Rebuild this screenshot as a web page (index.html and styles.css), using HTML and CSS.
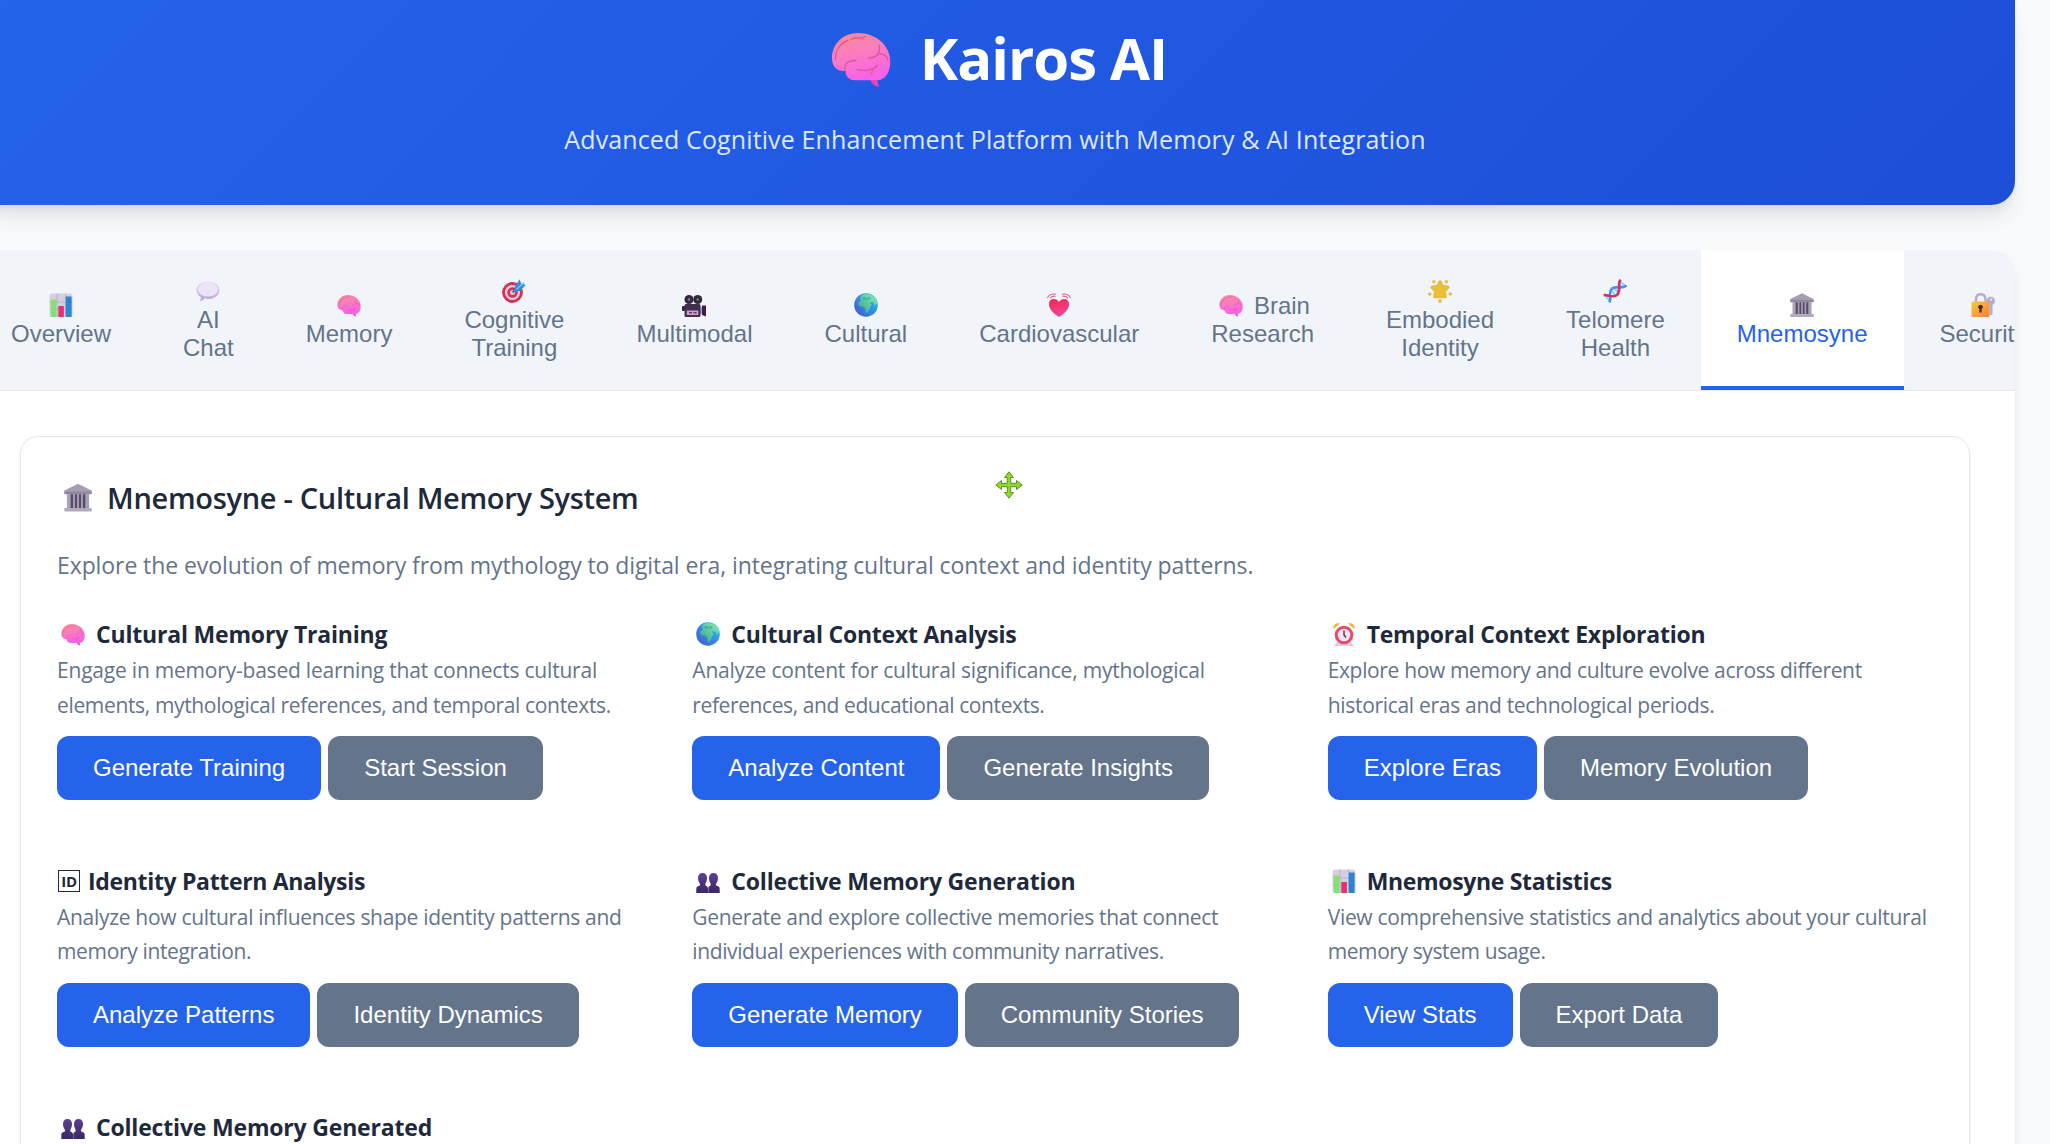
FILE: index.html
```html
<!DOCTYPE html>
<html lang="en">
<head>
<meta charset="utf-8">
<title>Kairos AI</title>
<link rel="stylesheet" href="styles.css">
</head>
<body>
<svg class="sprite" aria-hidden="true">
  <defs>
    <linearGradient id="pink" x1="0" y1="0" x2="0.3" y2="1"><stop offset="0" stop-color="#f98d90"/><stop offset="0.5" stop-color="#fb7cc0"/><stop offset="1" stop-color="#f763e6"/></linearGradient>
    <linearGradient id="sea" x1="1" y1="0" x2="0" y2="1"><stop offset="0" stop-color="#22c5f5"/><stop offset="0.5" stop-color="#2f8fe6"/><stop offset="1" stop-color="#4a4fc8"/></linearGradient>
    <linearGradient id="land" x1="1" y1="0" x2="0" y2="1"><stop offset="0" stop-color="#7ff5b0"/><stop offset="1" stop-color="#3f9f8c"/></linearGradient>
    <linearGradient id="heart" x1="0" y1="0" x2="0.3" y2="1"><stop offset="0" stop-color="#f4264e"/><stop offset="1" stop-color="#f0449c"/></linearGradient>
    <linearGradient id="bubble" x1="0" y1="0" x2="0" y2="1"><stop offset="0" stop-color="#e6dcf0"/><stop offset="1" stop-color="#b9a8d2"/></linearGradient>
    <linearGradient id="lock" x1="0" y1="0" x2="1" y2="1"><stop offset="0" stop-color="#fcc83c"/><stop offset="1" stop-color="#f3803a"/></linearGradient>
    <linearGradient id="purple" x1="0" y1="0" x2="0" y2="1"><stop offset="0" stop-color="#5b3f96"/><stop offset="1" stop-color="#3c2766"/></linearGradient>
    <linearGradient id="green" x1="0" y1="0" x2="0" y2="1"><stop offset="0" stop-color="#8edd6c"/><stop offset="1" stop-color="#74e878"/></linearGradient>
  </defs>
  <symbol id="brain" viewBox="0 0 24 24">
    <path d="M15.6 20.3l2.6-.4 1 3.6c-1.7 0-3-1.300-3.600-3.200z" fill="#e844b8"/>
    <path d="M.4 12C.4 6.600 4.600 2 10.800 2 18 2 23.700 7 23.700 13.500c0 4.200-1.900 7.400-5.400 7.400H9.500c-2.400 0-3.800-1.800-3.700-3.700C2.300 17.400.4 15.400.4 12z" fill="url(#pink)"/>
    <path d="M1.800 12.500c0-4 2.200-6.700 5-7.500M8 4.600c2.500-1.600 4.500.2 5.600-1.200M5.600 17c-.5-2.800 1.400-4.200 4.400-4M15 12c3.800 0 4.800-2.600 4.300-5M19.300 10.200c2 .2 3.200 1.200 3.500 2.600M10.500 16.600c3 .8 6.500.4 8-1.700M16.200 16.200c.6.600.4 1.600-.2 2.200" fill="none" stroke="#d95a98" stroke-width=".55" stroke-linecap="round"/>
  </symbol>
  <symbol id="chart" viewBox="0 0 24 24">
    <rect x=".5" y=".5" width="23" height="23.500" rx="2.500" fill="#d6cfe0"/>
    <path d="M.5 9h23M.5 16h23M8 .5v23M16.500.5v23" stroke="#b5abc4" stroke-width=".8"/>
    <rect x="1.800" y="6.500" width="5.600" height="17.500" fill="url(#green)"/>
    <rect x="9.300" y="13" width="5.600" height="11" fill="#e5336f"/>
    <rect x="16.800" y="3.500" width="5.800" height="20.500" fill="#2d83d4"/>
  </symbol>
  <symbol id="speech" viewBox="0 0 24 24">
    <path d="M12 2.500c6.400 0 11.500 3.700 11.500 8.700s-5 8.800-11.500 8.800c-1.200 0-2.300-.1-3.400-.4-1.200 1.700-3 2.700-4.600 2.500.7-1.200 1-2.500.7-4.200C2.200 16.400.5 14 .5 11.200.5 6.200 5.600 2.500 12 2.500z" fill="url(#bubble)"/>
    <ellipse cx="12" cy="10.500" rx="10" ry="7" fill="#f1eaf8" opacity=".85"/>
  </symbol>
  <symbol id="target" viewBox="0 0 24 24">
    <circle cx="10.500" cy="13.500" r="10.400" fill="#cf3355"/><circle cx="10.500" cy="13.500" r="7.600" fill="#f3c9dc"/><circle cx="10.500" cy="13.500" r="5.200" fill="#cf3355"/><circle cx="10.500" cy="13.500" r="2.500" fill="#f3c9dc"/>
    <path d="M10.500 13.500L18 6" stroke="#2a6fc0" stroke-width="1.800"/>
    <path d="M12.500 8.600L17.600.2l1.500 4.200 4.700 1.500-6 6.200-5 .9z" fill="#2f8fe0"/><path d="M14.500 10.200L22 3.500" stroke="#7cc6f8" stroke-width="1.200"/>
  </symbol>
  <symbol id="camera" viewBox="0 0 24 24">
    <rect x="0" y="13" width="3" height="5" rx="1" fill="#332440"/><rect x="18" y="14" width="3" height="7" fill="#b7a3c6"/><path d="M20 12.500h4v11l-4-1.500z" fill="#3c1f4a"/>
    <rect x="2.500" y="11" width="16" height="13" rx="1.500" fill="#40304e"/><circle cx="7" cy="6.500" r="4.500" fill="#33263f"/><circle cx="15.700" cy="6.500" r="4.500" fill="#33263f"/><circle cx="7" cy="6.500" r="1.200" fill="#8d7b9b"/><circle cx="15.700" cy="6.500" r="1.200" fill="#8d7b9b"/>
    <rect x="4.800" y="17.500" width="11.500" height="4.500" fill="#d69bc6"/><path d="M7 19.800h3m1.500 0h3" stroke="#604070" stroke-width="1.400"/>
  </symbol>
  <symbol id="globe" viewBox="0 0 24 24">
    <circle cx="12" cy="12" r="11.800" fill="url(#sea)"/>
    <path d="M7 2.500C10 .2 16 .2 20 4c2 2 3.300 4.500 3.500 7.300l-1.400-.5-1 2.400-1.700-3.600-2.800-.3-.6 1.300 2 .4-1.800 3c-.8 1.200-.3 2.700-1.300 3.700l-1.900 2.400c-1.300.2-1.500-2.600-2-4.600-.4-1.700-2.500-1.900-4-2C4.600 13.300 3.700 11.200 4.700 9.600l3-2.300-1.600-.8z" fill="url(#land)"/>
    <path d="M8 4.800l3-1 1 1.700 3-1.500 2 1-2 1.800-3.500-.2-2 .7z" fill="#2f96cf" opacity=".6"/>
  </symbol>
  <symbol id="beat" viewBox="0 0 24 24">
    <path d="M12 24C7 21 2 16.300 2 11.200 2 7.800 4.200 6 6.800 6c2.200 0 4 1 5.200 3 1.200-2 3-3 5.200-3C19.800 6 22 7.800 22 11.200 22 16.300 17 21 12 24z" fill="url(#heart)"/>
    <path d="M.6 4.500C2.200 2 5.300.6 8.400 1.200M3.400 5c1-1.300 2.900-2 4.600-1.800M23.400 4.500C21.800 2 18.700.6 15.600 1.200M20.600 5c-1-1.300-2.900-2-4.600-1.800" fill="none" stroke="#e8638c" stroke-width="1.200" stroke-linecap="round"/>
  </symbol>
  <symbol id="star" viewBox="0 0 24 24">
    <g fill="#ecc035"><path d="M12 1.600c.8 0 1.200.6 1.500 1.400l1.500 3.500 4.600.4c1.700.2 2.200 1.500 1 2.600L17.300 12.600l1 4.500c.4 1.700-.8 2.400-2.200 1.600H7.900c-1.400.8-2.600.1-2.200-1.600l1-4.500L3.400 9.500c-1.200-1.100-.7-2.400 1-2.600L9 6.500l1.500-3.500c.3-.8.7-1.400 1.500-1.400z" stroke="#d9a52c" stroke-width=".6"/>
    <circle cx="5.800" cy="2.800" r="1.700"/><circle cx="18.400" cy="2.800" r="1.700"/><circle cx="1.800" cy="15" r="1.800"/><circle cx="22.300" cy="15" r="1.800"/><ellipse cx="12" cy="22" rx="1.700" ry="2"/></g>
  </symbol>
  <symbol id="dna" viewBox="0 0 24 24">
    <path d="M4.500 16l4 4.500M3 18l3 3M8 11.500l5 5M10.500 9l5 4.500M16 5l4 4M18 3l4 4" stroke="#79cdf7" stroke-width="1.700"/>
    <path d="M6.500 23.500C8.500 17 5 13.500 9 9.500 13 6.500 19 10.500 23.500 6.500" fill="none" stroke="#4c8df0" stroke-width="2.600"/>
    <path d="M.7 16.200C5 15.200 9.500 19.500 14 16 18.500 12 14 5 17.500.7" fill="none" stroke="#ce3764" stroke-width="2.700"/>
  </symbol>
  <symbol id="temple" viewBox="0 0 24 24">
    <rect x="3" y="9" width="18" height="12" fill="#584c66"/><path d="M12 .2L23.700 6v3.200H.3V6z" fill="#a69db1"/><path d="M.3 7h23.400v1.800H.3z" fill="#8f859b"/>
    <path d="M2.500 9h3.200v12H2.500zM7.800 9h1.600v12H7.800zM11.200 9h1.600v12h-1.600zM14.600 9h1.600v12h-1.600zM18.300 9h3.200v12h-3.200z" fill="#aaa1b6"/><path d="M.3 21h23.400v3H.3z" fill="#b3aabd"/>
  </symbol>
  <symbol id="padlock" viewBox="0 0 24 24">
    <path d="M5 10V6.500C5 3 7 1.200 9.700 1.200S14.500 3 14.500 6.500V10" fill="none" stroke="#b9aec5" stroke-width="2.500"/><circle cx="19.800" cy="8" r="4.200" fill="#b7abcb"/><path d="M18.500 11h3v10l-1.500 1.500-1.500-1.500z" fill="#b7abcb"/><circle cx="20" cy="6.700" r="1.100" fill="#e8e2f0"/>
    <rect x=".5" y="8.500" width="18" height="15.500" rx="1.500" fill="url(#lock)"/><path d="M9.500 11.800a2.300 2.300 0 011.200 4.300v3.500H8.300v-3.500a2.300 2.300 0 011.200-4.300z" fill="#4a2b35"/>
  </symbol>
  <symbol id="clock" viewBox="0 0 24 24">
    <path d="M1.500 7C.5 3 4 .2 8 1.500zM22.500 7c1-4-2.500-6.800-6.500-5.500z" fill="#eeb534"/><path d="M5 20h14l3 4H2z" fill="#d9cbe6"/>
    <circle cx="12" cy="13" r="9.300" fill="#e34d6c"/><circle cx="12" cy="13" r="6.300" fill="#f4e4f2"/><path d="M12 8.500V13l2 2.500" fill="none" stroke="#583a58" stroke-width="1.500"/>
  </symbol>
  <symbol id="people" viewBox="0 0 24 24">
    <path d="M6.500 4C9.500 4 11 6 11 9c0 2.500-.8 4.300-1.600 5.500v2c1.500.6 2.600 1.300 2.600 3V24H.3v-4.500c0-2 1.700-2.500 3.600-3v-2C2.800 13.300 2 11.500 2 9c0-3 1.500-5 4.500-5zM17.500 4c3 0 4.500 2 4.500 5 0 2.500-.8 4.300-1.900 5.500v2c1.900.5 3.600 1 3.600 3V24H12.300v-4.500c0-1.700.8-2.400 2.300-3v-2C13.800 13.300 13 11.500 13 9c0-3 1.500-5 4.500-5z" fill="url(#purple)"/>
  </symbol>
</svg>

<div class="page">
  <header class="hero">
    <h1><svg class="emoji"><use href="#brain"/></svg> Kairos AI</h1>
    <p>Advanced Cognitive Enhancement Platform with Memory &amp; AI Integration</p>
  </header>

  <main class="shell">
    <nav class="tabs">
      <button class="tab"><svg class="emoji"><use href="#chart"/></svg> Overview</button>
      <button class="tab"><svg class="emoji"><use href="#speech"/></svg> AI Chat</button>
      <button class="tab"><svg class="emoji"><use href="#brain"/></svg> Memory</button>
      <button class="tab"><svg class="emoji"><use href="#target"/></svg> Cognitive Training</button>
      <button class="tab"><svg class="emoji"><use href="#camera"/></svg> Multimodal</button>
      <button class="tab"><svg class="emoji"><use href="#globe"/></svg> Cultural</button>
      <button class="tab"><svg class="emoji"><use href="#beat"/></svg> Cardiovascular</button>
      <button class="tab"><span class="pair"><svg class="emoji"><use href="#brain"/></svg> Brain</span> Research</button>
      <button class="tab"><svg class="emoji"><use href="#star"/></svg> Embodied Identity</button>
      <button class="tab"><svg class="emoji"><use href="#dna"/></svg> Telomere Health</button>
      <button class="tab active"><svg class="emoji"><use href="#temple"/></svg> Mnemosyne</button>
      <button class="tab"><svg class="emoji"><use href="#padlock"/></svg> Security</button>
    </nav>

    <section class="card">
      <h2><svg class="emoji"><use href="#temple"/></svg> Mnemosyne - Cultural Memory System</h2>
      <p class="intro">Explore the evolution of memory from mythology to digital era, integrating cultural context and identity patterns.</p>
      <div class="grid">
        <article>
          <h3><svg class="emoji"><use href="#brain"/></svg> Cultural Memory Training</h3>
          <p><span class="tight-1">Engage in memory-based learning that connects cultural</span><br><span class="tight-3">elements, mythological references, and temporal contexts.</span></p>
          <div class="actions"><button class="btn primary">Generate Training</button><button class="btn">Start Session</button></div>
        </article>
        <article>
          <h3 class="tight-1"><svg class="emoji"><use href="#globe"/></svg> Cultural Context Analysis</h3>
          <p><span class="tight-1">Analyze content for cultural significance, mythological</span><br><span class="tight-4">references, and educational contexts.</span></p>
          <div class="actions"><button class="btn primary">Analyze Content</button><button class="btn">Generate Insights</button></div>
        </article>
        <article>
          <h3 class="tight-1"><svg class="emoji"><use href="#clock"/></svg> Temporal Context Exploration</h3>
          <p><span class="tight-3">Explore how memory and culture evolve across different</span><br><span class="tight-2">historical eras and technological periods.</span></p>
          <div class="actions"><button class="btn primary">Explore Eras</button><button class="btn">Memory Evolution</button></div>
        </article>
        <article>
          <h3 class="tight-2"><span class="id-mark">ID</span> Identity Pattern Analysis</h3>
          <p><span class="tight-2">Analyze how cultural influences shape identity patterns and</span><br><span class="tight-3">memory integration.</span></p>
          <div class="actions"><button class="btn primary">Analyze Patterns</button><button class="btn">Identity Dynamics</button></div>
        </article>
        <article>
          <h3><svg class="emoji"><use href="#people"/></svg> Collective Memory Generation</h3>
          <p><span class="tight-2">Generate and explore collective memories that connect</span><br><span class="tight-4">individual experiences with community narratives.</span></p>
          <div class="actions"><button class="btn primary">Generate Memory</button><button class="btn">Community Stories</button></div>
        </article>
        <article>
          <h3 class="tight-2"><svg class="emoji"><use href="#chart"/></svg> Mnemosyne Statistics</h3>
          <p><span class="tight-2">View comprehensive statistics and analytics about your cultural</span><br><span class="tight-4">memory system usage.</span></p>
          <div class="actions"><button class="btn primary">View Stats</button><button class="btn">Export Data</button></div>
        </article>
        <article>
          <h3><svg class="emoji"><use href="#people"/></svg> Collective Memory Generated</h3>
        </article>
      </div>
    </section>
  </main>
</div>
<svg class="pointer" viewBox="0 0 28 28"><path d="M14 .8l4.500 5.700h-2.800v5.800h5.800V9.500L27.200 14l-5.700 4.500v-2.800h-5.800v5.800h2.800L14 27.200l-4.500-5.700h2.800v-5.800H6.500v2.800L.8 14l5.700-4.500v2.800h5.800V6.500H9.500z" fill="#8fd92e" stroke="#559422" stroke-width="1"/></svg>
</body>
</html>
```
FILE: styles.css
```css
* { box-sizing: border-box; margin: 0; padding: 0; }

html { overflow: hidden; }

body {
  height: 1144px;
  overflow: hidden;
  position: relative;
  background: #f9fafc;
  color: #1e293b;
  font-family: "Open Sans", "Noto Sans", sans-serif;
}

.sprite { position: absolute; width: 0; height: 0; }

.page { width: 2040px; margin-left: -25px; }

.emoji { display: inline-block; flex: none; width: 24px; height: 24px; }

.hero {
  height: 205px;
  padding-top: 10px;
  border-radius: 0 0 24px 24px;
  background: linear-gradient(135deg, #2563eb 0%, #1d4ed8 100%);
  box-shadow: 0 15px 22px -4px rgba(0, 0, 0, .1), 0 6px 9px -3px rgba(0, 0, 0, .05);
  color: #fff;
  text-align: center;
}
.hero h1 {
  display: flex;
  justify-content: center;
  align-items: center;
  height: 96px;
  padding-left: 8px;
  font-size: 58px;
  font-weight: 700;
  line-height: 96px;
  letter-spacing: -.0175em;
}
.hero h1 .emoji { width: 60px; height: 60px; margin-right: 29px; }
.hero p { margin-top: 12px; font-size: 25px; line-height: 42px; letter-spacing: .005em; color: #dee8fc; }

.shell {
  height: 940px;
  margin-top: 45px;
  overflow: hidden;
  border-radius: 24px;
  background: #fff;
  box-shadow: 0 6px 9px -1px rgba(0, 0, 0, .1);
}

.tabs {
  display: flex;
  height: 141px;
  background: #f1f5f9;
  border-bottom: 1px solid #e2e8f0;
}
.tab {
  flex: none;
  width: min-content;
  padding: 4px 36px 0;
  border: 0;
  border-bottom: 4px solid transparent;
  background: none;
  color: #64748b;
  font: 24px/28px "Liberation Sans", Arial, sans-serif;
  text-align: center;
}
.tab .emoji { margin: 0 4px; vertical-align: -3px; }
.tab .pair { white-space: nowrap; }
.tab.active { background: #fff; color: #2563eb; border-bottom-color: #2563eb; }

.card {
  height: 800px;
  margin: 45px 45px 0;
  padding: 36px;
  border: 1px solid #e2e8f0;
  border-radius: 18px;
  box-shadow: 0 2px 5px rgba(0, 0, 0, .07);
}
.card h2 {
  display: flex;
  align-items: center;
  height: 48px;
  font-size: 29px;
  font-weight: 600;
  letter-spacing: -.0106em;
}
.card h2 .emoji { width: 28px; height: 29px; margin: 0 15px 0 7px; }
.intro { margin-top: 25px; font-size: 23px; line-height: 38px; letter-spacing: -.0039em; color: #64748b; }

.grid {
  display: grid;
  grid-template-columns: repeat(3, minmax(0, 1fr));
  gap: 61.5px 30px;
  margin-top: 31px;
}
h3 {
  display: flex;
  align-items: center;
  height: 38px;
  font-size: 23px;
  font-weight: 700;
  letter-spacing: -.008em;
}
h3 .emoji { margin: 0 11px 0 4px; }
.id-mark {
  width: 22px;
  height: 22px;
  margin: 0 8px 0 1px;
  border: 1px solid #1e293b;
  font-size: 15px;
  line-height: 20px;
  text-align: center;
}
article p { font-size: 21px; line-height: 34.5px; color: #64748b; white-space: nowrap; }
.tight-1 { letter-spacing: -.01em; }
.tight-2 { letter-spacing: -.0143em; }
.tight-3 { letter-spacing: -.0165em; }
.tight-4 { letter-spacing: -.019em; }

.actions { display: flex; gap: 7px; margin-top: 14px; }
.btn {
  height: 64px;
  padding: 0 36px;
  border: 0;
  border-radius: 12px;
  background: #64748b;
  color: #fff;
  font: 24px "Liberation Sans", Arial, sans-serif;
}
.btn.primary { background: #2563eb; }

.pointer { position: absolute; left: 995px; top: 471px; width: 28px; height: 28px; }
```
